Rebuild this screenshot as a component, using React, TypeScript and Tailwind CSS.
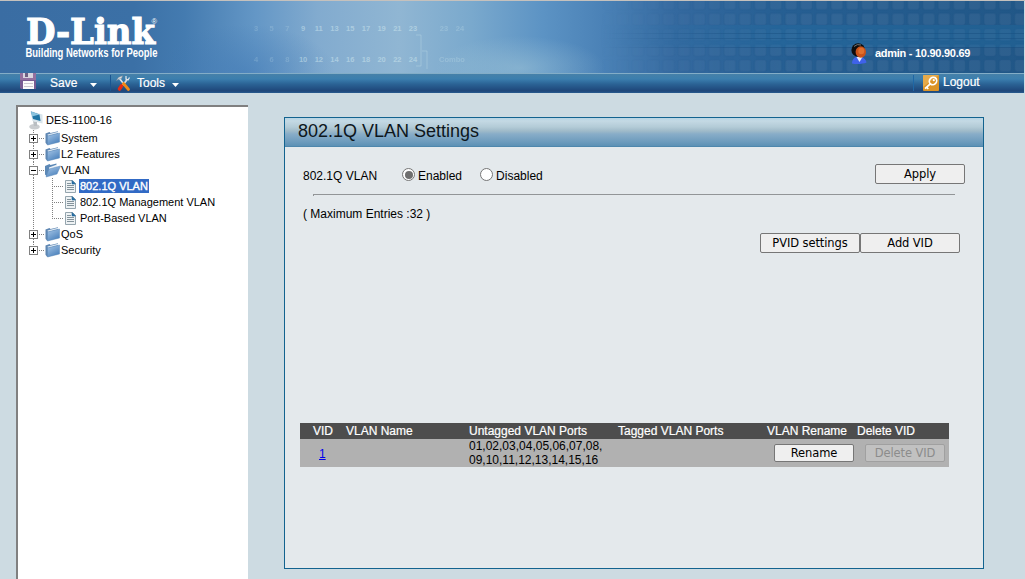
import React from 'react';

const PORT_MARKS = [3, 5, 7, 9, 11, 13, 15, 17, 19, 21, 23];

function Backdrop() {
  return (
    <svg className="absolute inset-0" width="1024" height="72" viewBox="0 1 1024 72" aria-hidden="true">
      <defs>
        <linearGradient id="sky" x1="0" x2="1" y1="0" y2="0">
          <stop offset="0" stopColor="#3a6da3" />
          <stop offset=".13" stopColor="#3b70a6" />
          <stop offset=".18" stopColor="#447bb0" />
          <stop offset=".25" stopColor="#6497c6" />
          <stop offset=".31" stopColor="#82abcf" />
          <stop offset=".39" stopColor="#90b6d3" />
          <stop offset=".46" stopColor="#7aa9cd" />
          <stop offset=".53" stopColor="#5c93c4" />
          <stop offset=".59" stopColor="#4a81b6" />
          <stop offset=".66" stopColor="#34699f" />
          <stop offset=".76" stopColor="#265f93" />
          <stop offset="1" stopColor="#215787" />
        </linearGradient>
        <radialGradient id="glow">
          <stop offset="0" stopColor="#a4c8d8" stopOpacity=".5" />
          <stop offset="1" stopColor="#a4c8d8" stopOpacity="0" />
        </radialGradient>
        <radialGradient id="shade">
          <stop offset="0" stopColor="#3e77b4" stopOpacity=".5" />
          <stop offset="1" stopColor="#3e77b4" stopOpacity="0" />
        </radialGradient>
        <linearGradient id="fade" x1="0" x2="1" y1="0" y2="0">
          <stop offset="0" stopColor="#fff" stopOpacity="0" />
          <stop offset=".45" stopColor="#fff" />
          <stop offset="1" stopColor="#fff" />
        </linearGradient>
        <pattern id="tiles" width="15.3" height="15.5" patternUnits="userSpaceOnUse" x="3" y="-4">
          <rect x="2" y="2" width="11.5" height="11.5" rx="2" fill="#7f9cba" fillOpacity=".13" stroke="#1a4f80" strokeOpacity=".18" strokeWidth="1.5" />
        </pattern>
        <mask id="right">
          <rect x="600" width="424" height="74" fill="url(#fade)" />
        </mask>
      </defs>
      <rect width="1024" height="74" fill="url(#sky)" />
      <ellipse cx="520" cy="68" rx="85" ry="32" fill="url(#glow)" />
      <ellipse cx="245" cy="72" rx="90" ry="48" fill="url(#shade)" />
      <g mask="url(#right)">
        <rect x="600" width="424" height="74" fill="url(#tiles)" />
        <rect x="600" y="25" width="424" height="22" fill="#2378ad" opacity=".26" />
        <path d="M600 33.500h424M600 38.500h424M600 47.500h424" stroke="#174f81" opacity=".5" />
      </g>
      <g fill="#d2eaf0" fillOpacity=".5" fontFamily="Liberation Sans" fontSize="7.5" fontWeight="700" textAnchor="middle">
        {PORT_MARKS.map((n, i) => (
          <React.Fragment key={n}>
            <text x={256 + i * 15.7} y="31" opacity={i < 3 ? 0.4 : 1}>{n}</text>
            <text x={256 + i * 15.7} y="62" opacity={i < 3 ? 0.4 : 1}>{n + 1}</text>
          </React.Fragment>
        ))}
        <g opacity=".5">
          <text x="444" y="31">23</text>
          <text x="460" y="31">24</text>
          <text x="452" y="62">Combo</text>
        </g>
      </g>
      <path d="M416 35h5v31h-5M427 69V51h-5" fill="none" stroke="#bddbe9" strokeOpacity=".4" />
    </svg>
  );
}

function Logo() {
  return (
    <svg width="140" height="48" viewBox="22 14 140 48" className="ml-[22px] mt-[13px] overflow-visible" fill="#fff">
      <text x="26" y="44" fontFamily="DejaVu Serif" fontWeight="700" fontSize="34.5" textLength="129" lengthAdjust="spacingAndGlyphs" stroke="#fff" strokeWidth="1.1">D-Link</text>
      <text x="151.5" y="24" fontFamily="Liberation Sans" fontSize="7.5">®</text>
      <text x="25.5" y="56.5" fontFamily="Liberation Sans" fontWeight="700" fontSize="12.5" textLength="132" lengthAdjust="spacingAndGlyphs">Building Networks for People</text>
    </svg>
  );
}

function UserIcon() {
  return (
    <svg width="17" height="22" viewBox="0 0 17 22">
      <path d="M1 20.500c0-4.500 3-7 7-7s7 3 7.500 6c-3 1.500-10 2-14.500 1z" fill="#3f62ea" />
      <path d="M5.500 14l3 5 3-5z" fill="#e9eefc" />
      <circle cx="7.200" cy="7" r="6.800" fill="#0e0c0c" />
      <ellipse cx="9.800" cy="9" rx="5.200" ry="5.800" fill="#c9521a" />
      <path d="M3 3.500q3-3 7-1.500" stroke="#777" fill="none" />
      <ellipse cx="10.300" cy="8" rx="3" ry="3.200" fill="#e0702e" />
    </svg>
  );
}

function FloppyIcon() {
  return (
    <svg width="16" height="16" viewBox="0 0 16 16">
      <path d="M0 0h16v16H1l-1-1z" fill="#785c93" />
      <path d="M0 0h16v7H0z" fill="#94709f" />
      <path d="M3 0h10v5H3z" fill="#d9d4df" />
      <path d="M5 0h3v4H5z" fill="#6f5f82" />
      <path d="M3 8h11v8H3z" fill="#fafafa" />
      <path d="M4 10.500h9M4 13.500h9" stroke="#cbc7cf" />
    </svg>
  );
}

function ToolsIcon() {
  return (
    <svg width="15" height="17" viewBox="0 0 15 17" fill="none">
      <path d="M11 4 10 6 6.500 10.500" stroke="#d5d9dd" strokeWidth="1.800" />
      <path d="M10 1v3l2 1 1.500-2.500" stroke="#e6e9ec" strokeWidth="1.200" />
      <path d="M5.500 11 3.500 14" stroke="#e52b12" strokeWidth="3.600" strokeLinecap="round" />
      <path d="M3.500 3.500 7 8" stroke="#e0e3e6" strokeWidth="1.600" />
      <path d="M7.500 8.500 12.500 14.500" stroke="#f28a16" strokeWidth="2.800" strokeLinecap="round" />
      <path d="M.5 5.500 2.500 2.500 6.500.8 5.500 3.500 3 4z" fill="#dfe3e6" stroke="#8a8f96" strokeWidth=".5" />
    </svg>
  );
}

function KeyIcon() {
  return (
    <svg width="16" height="16" viewBox="0 0 16 16">
      <rect width="16" height="16" rx="1" fill="#dc9427" />
      <path d="M0 0h16L0 12z" fill="#eebb67" opacity=".55" />
      <g fill="none" stroke="#fff" strokeWidth="1.700">
        <ellipse cx="10" cy="6" rx="3.500" ry="3.900" transform="rotate(40 10 6)" />
        <path d="M7.500 8.700 2 13.700M3.500 12.200l1.800 1.800" />
      </g>
      <circle cx="10.800" cy="5.200" r="1.100" fill="#fff" />
    </svg>
  );
}

function Caret() {
  return (
    <svg width="7" height="4" viewBox="0 0 7 4">
      <path d="M0 0h7L3.500 4z" fill="#fff" />
    </svg>
  );
}

function MonitorIcon() {
  return (
    <svg width="15" height="19" viewBox="0 0 15 19">
      <ellipse cx="5.500" cy="15.800" rx="5.300" ry="2.800" fill="#c9cccf" />
      <path d="M4 10l4 1v4H5z" fill="#b9bec2" />
      <path d="M1.500 0 13.500 3.500v9L3.500 10z" fill="#d9e5ec" />
      <path d="M2 .5 10.500 3.500l1 6.500L4 8z" fill="#2176a5" />
      <path d="M2 .5 10.500 3.500 3 5.500z" fill="#8cc4df" />
    </svg>
  );
}

function Folder({ open = false }: { open?: boolean }) {
  return (
    <svg width="17" height="16" viewBox="0 0 17 16" className="-ml-px">
      <defs>
        <linearGradient id="folder" x1="0" x2=".6" y1="0" y2="1">
          <stop offset="0" stopColor="#a9c8e8" />
          <stop offset="1" stopColor="#4d83bd" />
        </linearGradient>
      </defs>
      {open ? (
        <>
          <path d="M1 4 5.500 2l1 1 6-1.500v5L3 14.500l-2-2z" fill="#5c88b6" />
          <path d="M5 5.500 13 2.500v3l-8 3z" fill="#eef4f9" />
          <path d="M5 7 16.500 4 13 12 2 15z" fill="url(#folder)" stroke="#5c8aba" strokeWidth=".5" />
        </>
      ) : (
        <>
          <path d="M1.500 3.500 5.500 2l1 1L14 1.200V12L3 14.800l-1.500-2z" fill="#5e86b2" />
          <path d="M3.500 4.500 14 1.800v1.500L4 6z" fill="#dce8f3" />
          <path d="M3.500 6 15.500 3v9L3.500 15z" fill="url(#folder)" stroke="#5c8aba" strokeWidth=".5" />
        </>
      )}
    </svg>
  );
}

function DocIcon() {
  return (
    <svg width="11" height="13" viewBox="0 0 11 13">
      <path d="M.5.500h7l3 3v9H.5z" fill="#eef2f4" stroke="#95a5ae" />
      <path d="M7 .500v3.500h3.500z" fill="#236a9f" stroke="#236a9f" strokeWidth=".6" />
      <path d="M2 3.500h4M2 5.500h7M2 7.500h7M2 9.500h7" stroke="#84939b" />
    </svg>
  );
}

function Branch({ open = false, last = false }: { open?: boolean; last?: boolean }) {
  return (
    <svg width="16" height="16" viewBox="0 0 16 16" shapeRendering="crispEdges">
      <path d={last ? 'M4.500 0v4' : 'M4.500 0v4M4.500 13v3'} stroke="#808080" strokeDasharray="1 1" />
      <path d="M10 8.500h6" stroke="#808080" strokeDasharray="1 1" />
      <rect x=".5" y="4.500" width="8" height="8" fill="#fff" stroke="#808080" />
      <path d={open ? 'M2 8.500h5' : 'M2 8.500h5M4.500 6v5'} stroke="#000" />
    </svg>
  );
}

function FolderRow({ label, open, last }: { label: string; open?: boolean; last?: boolean }) {
  return (
    <div className="flex h-4 items-center">
      <Branch open={open} last={last} />
      <Folder open={open} />
      <span>{label}</span>
    </div>
  );
}

function PageRow({ label, selected = false, last = false }: { label: string; selected?: boolean; last?: boolean }) {
  return (
    <div className="flex h-4 items-center">
      <svg width="36" height="16" viewBox="0 0 36 16" shapeRendering="crispEdges">
        <path d="M4.500 0v16" stroke="#808080" strokeDasharray="1 1" />
        <path d={last ? 'M23.500 0v9' : 'M23.500 0v16'} stroke="#808080" strokeDasharray="1 1" />
        <path d="M25 8.500h10" stroke="#808080" strokeDasharray="1 1" />
      </svg>
      <DocIcon />
      <span className={selected ? 'ml-[3px] h-[14px] bg-[#316ac5] px-px leading-[14px] text-white [-webkit-text-stroke:0.35px_white]' : 'ml-1'}>{label}</span>
    </div>
  );
}

function Button({ children, className, disabled }: { children: string; className: string; disabled?: boolean }) {
  return (
    <button
      disabled={disabled}
      className={`rounded-[2px] border pt-[2px] text-center font-['Verdana','DejaVu_Sans',sans-serif] text-[11.5px] leading-none tracking-[-0.1px] ${disabled ? 'border-[#a0a0a0] bg-[#c1c1c1] text-[#8c8c8c]' : 'border-[#767676] bg-[#efefef] text-black'} ${className}`}
    >
      {children}
    </button>
  );
}

function Radio({ checked, label }: { checked?: boolean; label: string }) {
  return (
    <label className="flex items-center">
      <span className="mb-[3px] mr-[3px] flex size-[13px] items-center justify-center rounded-full border border-[#767676] bg-white">
        {checked && <span className="size-[8px] rounded-full bg-[#6f6f6f]" />}
      </span>
      {label}
    </label>
  );
}

export default function App() {
  return (
    <div className="flex h-[579px] w-[1025px] flex-col overflow-hidden bg-[#cddbe2] font-['Liberation_Sans',Arial,sans-serif] text-[12px] leading-[14px] text-black">
      <div className="h-px shrink-0 bg-[#c5c1bd]" />
      <header className="relative h-[72px] w-[1024px] shrink-0 overflow-hidden">
        <Backdrop />
        <div className="relative flex">
          <Logo />
          <div className="ml-[689px] mt-[42px] flex">
            <UserIcon />
            <span className="ml-[7px] mt-[3px] whitespace-nowrap text-[11px] font-bold tracking-[-0.27px] text-white">admin - 10.90.90.69</span>
          </div>
        </div>
      </header>
      <nav className="flex h-5 w-[1024px] shrink-0 items-start border-t border-[#83adc7] bg-[linear-gradient(#4681a9_0px,#3b7eae_5px,#2b6395_10px,#1e4679_17px,#285c90_19px)] text-white [-webkit-text-stroke:0.2px_white]">
        <div className="ml-5 flex">
          <div className="-mt-px"><FloppyIcon /></div>
          <span className="ml-[14px] mt-[2px] w-7">Save</span>
          <div className="ml-3 mt-[9px]"><Caret /></div>
        </div>
        <div className="ml-[13px] mt-px h-4 w-px bg-[#1a5590]" />
        <div className="ml-[5px] mt-px"><ToolsIcon /></div>
        <span className="ml-[6px] mt-[2px] w-[30px]">Tools</span>
        <div className="ml-[5px] mt-[9px]"><Caret /></div>
        <div className="ml-[734px] mt-px h-4 w-px bg-[#1f67a5]" />
        <div className="ml-[9px] mt-px"><KeyIcon /></div>
        <span className="ml-1 mt-px">Logout</span>
      </nav>

      <div className="flex min-h-0 flex-1">
        <aside className="ml-4 mt-3 w-[232px] shrink-0 border-l-2 border-t-2 border-[#808080] bg-white pl-[11px] pt-[4px] text-[11px]">
          <div className="flex h-[19px] items-start">
            <MonitorIcon />
            <span className="ml-[2px] mt-[2px]">DES-1100-16</span>
          </div>
          <FolderRow label="System" />
          <FolderRow label="L2 Features" />
          <FolderRow label="VLAN" open />
          <PageRow label="802.1Q VLAN" selected />
          <PageRow label="802.1Q Management VLAN" />
          <PageRow label="Port-Based VLAN" last />
          <FolderRow label="QoS" />
          <FolderRow label="Security" last />
        </aside>

        <main className="ml-9 mt-6 flex h-[452px] w-[700px] flex-col border border-[#13638f] bg-[#e4e9ec]">
          <h1 className="h-[29px] shrink-0 bg-[linear-gradient(#b7d5e5_0px,#c4d9e4_3px,#b3cbd7_9px,#9fbac9_13px,#88adc8_16px,#709dbe_23px,#5c91b5_28px,#407da4_29px)] pl-[13px] text-[18px] leading-[26px] text-[#0d161c]">802.1Q VLAN Settings</h1>
          <div className="ml-[18px] mt-[15px] flex h-7 items-center">
            <span className="w-[99px]">802.1Q VLAN</span>
            <Radio checked label="Enabled" />
            <div className="w-[18px]" />
            <Radio label="Disabled" />
            <Button className="-mt-1 ml-auto mr-[18px] h-5 w-[90px]">Apply</Button>
          </div>
          <div className="ml-[28px] mt-1 h-[2px] w-[642px] border-l border-t border-[#929597]" />
          <p className="ml-[18px] mt-[11px]">( Maximum Entries :32 )</p>
          <div className="ml-[475px] mt-3 flex">
            <Button className="h-5 w-[100px]">PVID settings</Button>
            <Button className="h-5 w-[100px]">Add VID</Button>
          </div>
          <div className="ml-[15px] mt-[170px] w-[649px]">
            <div className="grid h-4 grid-cols-[45px_124px_149px_149px_90px_92px] items-center bg-[#4d4d4d] text-white [-webkit-text-stroke:0.2px_white]">
              <span className="pl-[13px]">VID</span>
              <span className="pl-px">VLAN Name</span>
              <span>Untagged VLAN Ports</span>
              <span>Tagged VLAN Ports</span>
              <span>VLAN Rename</span>
              <span>Delete VID</span>
            </div>
            <div className="grid h-7 grid-cols-[45px_124px_149px_149px_90px_92px] items-center bg-[#b1b1b1]">
              <a className="ml-[19px] mt-px w-[7px] text-[#0000ee] underline">1</a>
              <span />
              <span>01,02,03,04,05,06,07,08,<br />09,10,11,12,13,14,15,16</span>
              <span />
              <Button className="ml-[7px] h-[18px] w-[80px]">Rename</Button>
              <Button disabled className="ml-2 h-[18px] w-[80px]">Delete VID</Button>
            </div>
          </div>
        </main>
      </div>
    </div>
  );
}
